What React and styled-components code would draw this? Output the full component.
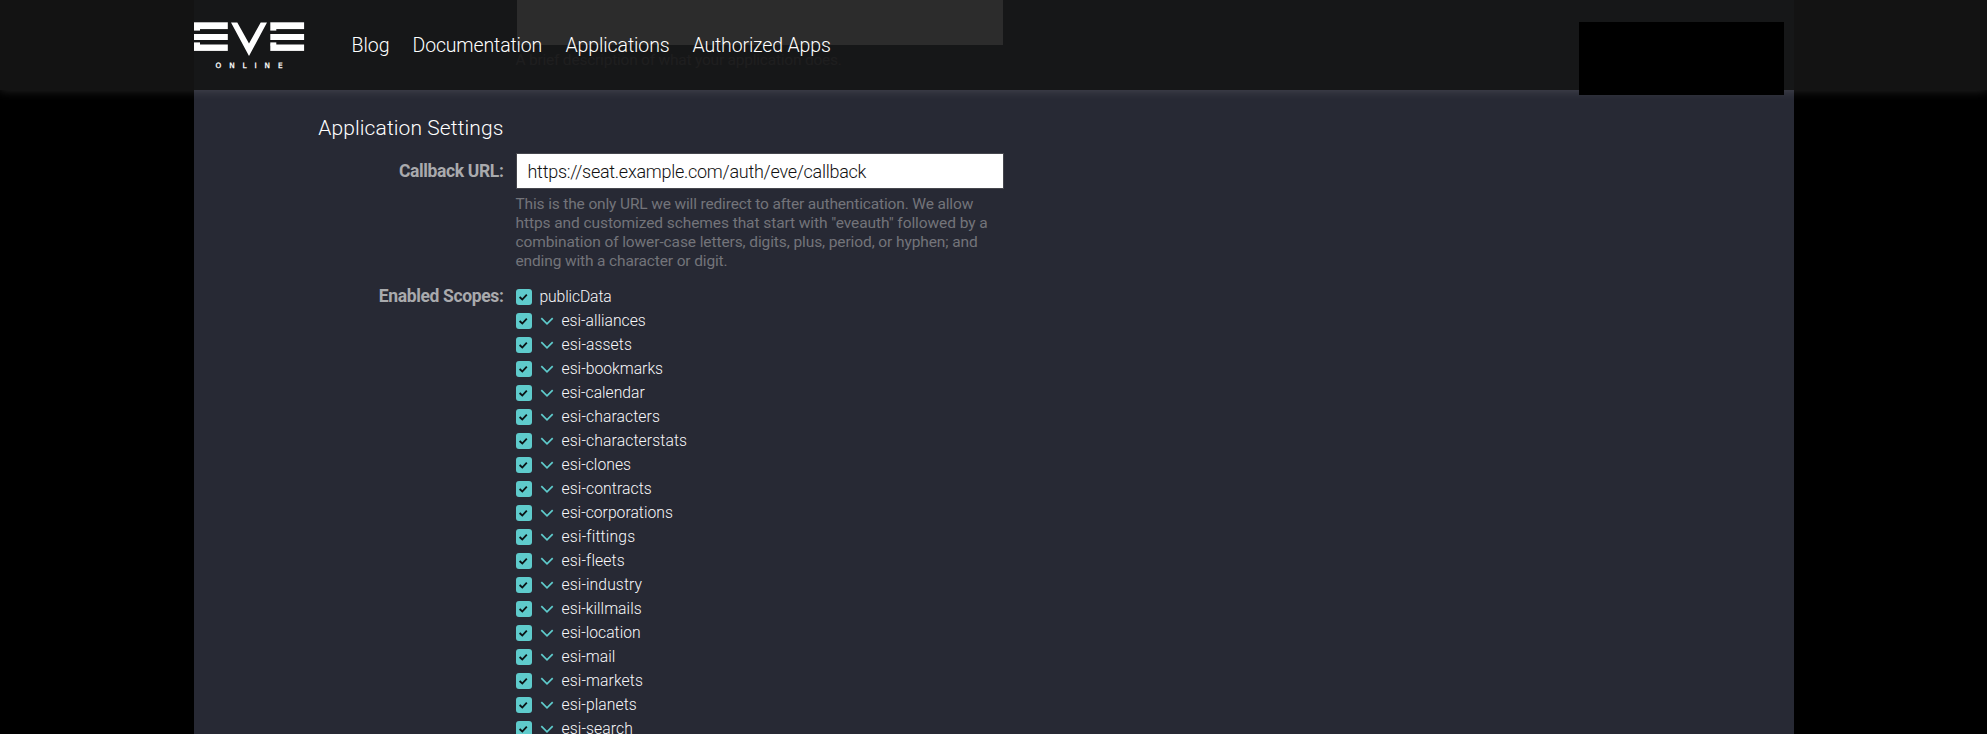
import React from "react";
import styled, { createGlobalStyle } from "styled-components";

const GlobalStyle = createGlobalStyle`
  * { box-sizing: border-box; }
  html, body { margin: 0; background: #000; overflow: hidden; }
  body { font-family: Roboto, "Liberation Sans", sans-serif; }
`;

const Page = styled.div`
  position: relative;
  height: 734px;
  overflow: hidden;
  display: flex;
  justify-content: center;
  background: #000;
`;

const Panel = styled.main`
  width: 1600px;
  height: 734px;
  overflow: hidden;
  background: #272934;
`;

const Header = styled.header`
  position: absolute;
  top: 0;
  left: 0;
  right: 0;
  height: 90px;
  display: flex;
  justify-content: center;
  background: rgba(21, 21, 21, 0.9);
  box-shadow: 0 0 10px rgba(255, 255, 255, 0.16);
`;

const HeaderInner = styled.div`
  width: 1600px;
  display: flex;
  align-items: flex-start;
`;

const Logo = styled.svg`
  display: block;
  width: 111px;
  height: 50px;
  margin-top: 22px;
`;

const Nav = styled.nav`
  display: flex;
  margin-left: 47px;
  margin-top: 33px;
`;

const NavLink = styled.a`
  width: ${(p) => p.$width}px;
  font-size: 19.5px;
  font-weight: 300;
  line-height: 26px;
  letter-spacing: ${(p) => p.$spacing || 0}px;
  color: #fff;
  white-space: nowrap;
`;

const AccountBox = styled.div`
  width: 205px;
  height: 73px;
  margin: 22px 10px 0 auto;
  background: #000;
`;

const FormRow = styled.div`
  display: grid;
  grid-template-columns: 310px 488px;
  column-gap: 12px;
  margin-top: ${(p) => p.$top || 0}px;
`;

const Textarea = styled.div`
  width: 486px;
  height: 45px;
  margin-left: 1px;
  background: #fff;
`;

const Section = styled.h2`
  margin: 0;
  text-align: right;
  font-weight: 300;
  font-size: 21px;
  line-height: 26px;
  letter-spacing: 0.1px;
  color: #fff;
`;

const Label = styled.label`
  margin-top: ${(p) => p.$top || 0}px;
  text-align: right;
  font-weight: 700;
  font-size: 17.5px;
  line-height: 24px;
  letter-spacing: -0.36px;
  color: #a9aaad;
`;

const Input = styled.input`
  display: block;
  width: 488px;
  height: 36px;
  padding: 0 11px;
  border: 1px solid #45464d;
  border-radius: 0;
  outline: 0;
  background: #fff;
  color: #111;
  font: 300 18px Roboto, "Liberation Sans", sans-serif;
  letter-spacing: -0.27px;
`;

const Help = styled.p`
  margin: ${(p) => p.$top || 0}px 0 0;
  font-size: 15.5px;
  line-height: 19px;
  color: #73747a;
  white-space: nowrap;
`;

const HelpLine = styled.span`
  display: block;
  letter-spacing: ${(p) => p.$spacing || 0}px;
`;

const ScopeList = styled.ul`
  margin: 0;
  padding: 0;
  list-style: none;
`;

const ScopeRow = styled.li`
  display: flex;
  align-items: center;
  height: 24px;
`;

const CheckBox = styled.span`
  display: flex;
  width: 16px;
  height: 16px;
  border-radius: 3px;
  background: #5fcbcc;
`;

const Chevron = styled.svg`
  display: block;
  margin-left: 8px;
`;

const ScopeName = styled.span`
  margin-left: 8px;
  font-weight: 300;
  font-size: 15.7px;
  line-height: 24px;
  letter-spacing: ${(p) => p.$spacing || 0}px;
  color: #f8f8fa;
`;

const SCOPES = [
  ["esi-alliances", 0],
  ["esi-assets", 0.1],
  ["esi-bookmarks", 0.02],
  ["esi-calendar", 0],
  ["esi-characters", 0.1],
  ["esi-characterstats", 0.12],
  ["esi-clones", 0.04],
  ["esi-contracts", 0.1],
  ["esi-corporations", 0.02],
  ["esi-fittings", 0.18],
  ["esi-fleets", 0.12],
  ["esi-industry", 0.1],
  ["esi-killmails", 0.04],
  ["esi-location", 0.02],
  ["esi-mail", 0.05],
  ["esi-markets", 0.1],
  ["esi-planets", 0.08],
  ["esi-search", 0.1],
];

const NAV = [
  ["Blog", 61, 0],
  ["Documentation", 153, -0.15],
  ["Applications", 127, -0.1],
  ["Authorized Apps", 140, -0.15],
];

const HELP = [
  ["This is the only URL we will redirect to after authentication. We allow", -0.15],
  ['https and customized schemes that start with "eveauth" followed by a', -0.08],
  ["combination of lower-case letters, digits, plus, period, or hyphen; and", -0.1],
  ["ending with a character or digit.", -0.14],
];

function Bars({ x }) {
  return (
    <g transform={`translate(${x} 0)`}>
      <rect x="0" y="0.3" width="33.8" height="6.8" />
      <rect x="0" y="7" width="6" height="1.6" />
      <rect x="0" y="12" width="33.8" height="6" />
      <rect x="0" y="20.4" width="6" height="3" />
      <rect x="0" y="22.5" width="33.8" height="6.4" />
    </g>
  );
}

function EveLogo() {
  return (
    <Logo viewBox="0 0 111 50" fill="#fff">
      <Bars x={0} />
      <path d="M37 0.5 H43.3 L55 21.5 L66.7 0.5 H73 L55 34 Z" />
      <Bars x={76.3} />
      <text x="21.5" y="46.2" fontSize="7.3" fontFamily="DejaVu Sans, sans-serif" stroke="#fff" strokeWidth="0.3" textLength="67" lengthAdjust="spacing">
        ONLINE
      </text>
    </Logo>
  );
}

function Checked() {
  return (
    <CheckBox>
      <svg width="16" height="16" viewBox="0 0 16 16">
        <path d="M3.6 8 L6.3 10.5 L10.8 5.6" fill="none" stroke="#0b1416" strokeWidth="1.8" />
      </svg>
    </CheckBox>
  );
}

function Caret() {
  return (
    <Chevron width="14" height="9" viewBox="0 0 14 9">
      <path d="M1.3 1.2 L7 6.8 L12.7 1.2" fill="none" stroke="#5fcbcc" strokeWidth="1.7" />
    </Chevron>
  );
}

export default function App() {
  return (
    <>
      <GlobalStyle />
      <Page>
        <Panel>
          <FormRow>
            <span />
            <div>
              <Textarea />
              <Help $top={6}>
                <HelpLine $spacing={-0.22}>A brief description of what your application does.</HelpLine>
              </Help>
            </div>
          </FormRow>
          <FormRow $top={45}>
            <Section>Application Settings</Section>
          </FormRow>
          <FormRow $top={12}>
            <Label $top={6} htmlFor="callback">Callback URL:</Label>
            <div>
              <Input id="callback" defaultValue="https://seat.example.com/auth/eve/callback" />
              <Help $top={6}>
                {HELP.map(([text, spacing]) => (
                  <HelpLine key={text} $spacing={spacing}>{text}</HelpLine>
                ))}
              </Help>
            </div>
          </FormRow>
          <FormRow $top={14}>
            <Label $top={-1}>Enabled Scopes:</Label>
            <ScopeList>
              <ScopeRow>
                <Checked />
                <ScopeName $spacing={-0.12}>publicData</ScopeName>
              </ScopeRow>
              {SCOPES.map(([name, spacing]) => (
                <ScopeRow key={name}>
                  <Checked />
                  <Caret />
                  <ScopeName $spacing={spacing}>{name}</ScopeName>
                </ScopeRow>
              ))}
            </ScopeList>
          </FormRow>
        </Panel>
        <Header>
          <HeaderInner>
            <EveLogo />
            <Nav>
              {NAV.map(([text, width, spacing]) => (
                <NavLink key={text} $width={width} $spacing={spacing}>{text}</NavLink>
              ))}
            </Nav>
            <AccountBox />
          </HeaderInner>
        </Header>
      </Page>
    </>
  );
}
